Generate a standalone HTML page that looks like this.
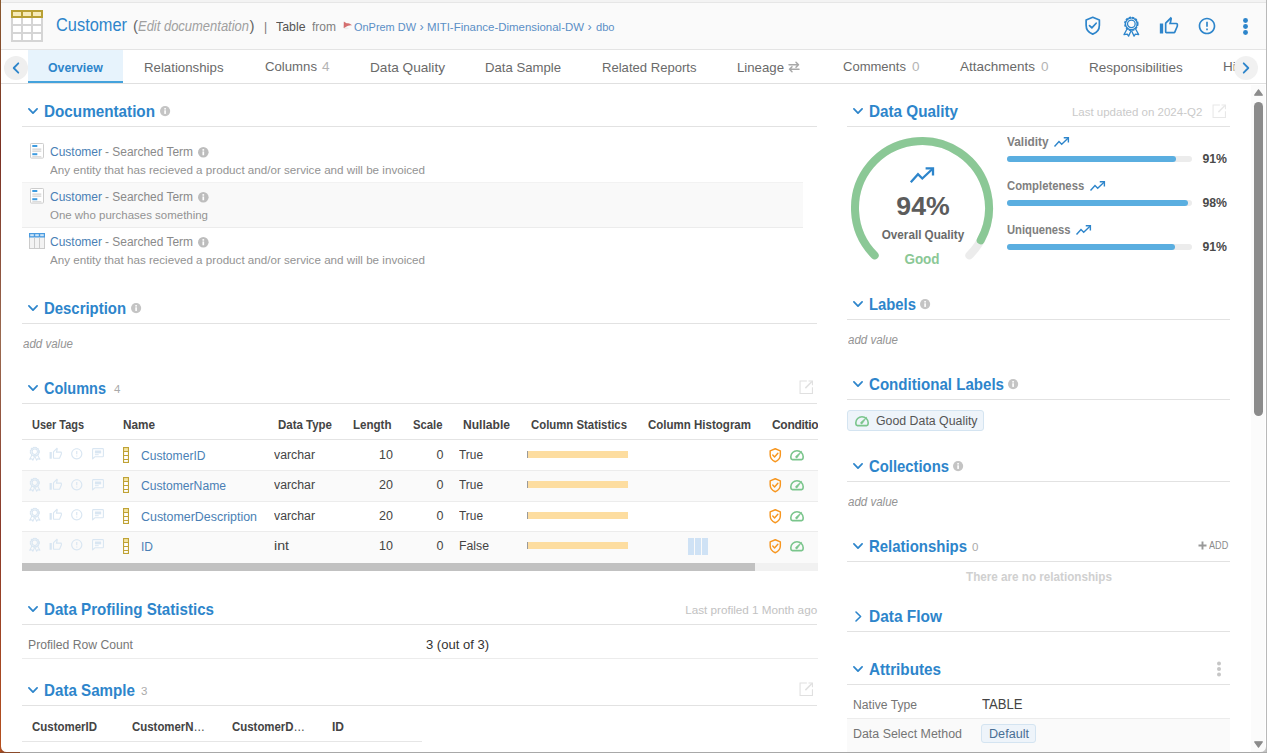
<!DOCTYPE html>
<html lang="en"><head><meta charset="utf-8"><title>Customer - Table</title>
<style>
html,body{margin:0;padding:0;}
body{width:1267px;height:753px;overflow:hidden;position:relative;background:#fff;font-family:"Liberation Sans", Arial, sans-serif;}
.t{position:absolute;white-space:nowrap;line-height:20px;height:20px;}
svg{display:block;overflow:visible;}
</style></head>
<body>
<div style="position:absolute;left:0px;top:0px;width:1267px;height:3px;background:#f3f3f3;"></div>
<div style="position:absolute;left:0px;top:2px;width:1267px;height:1px;background:#e6e6e6;"></div>
<div style="position:absolute;left:0px;top:3px;width:1267px;height:46px;background:#fafafa;"></div>
<div style="position:absolute;left:0px;top:49px;width:1267px;height:1px;background:#e4e4e4;"></div>
<div style="position:absolute;left:0px;top:83px;width:1267px;height:1px;background:#e0e0e0;"></div>
<svg style="position:absolute;left:11px;top:10px;" width="32" height="32" viewBox="0 0 32 32"><rect x="0" y="0" width="32" height="32" fill="#fff"/>
<g fill="#d5d5d5"><rect x="0" y="8" width="2" height="24"/><rect x="10" y="8" width="2" height="24"/><rect x="20" y="8" width="2" height="24"/><rect x="30" y="8" width="2" height="24"/>
<rect x="0" y="14" width="32" height="2"/><rect x="0" y="22" width="32" height="2"/><rect x="0" y="30" width="32" height="2"/></g>
<rect x="0" y="0" width="32" height="8" fill="#b8a034"/>
<g fill="#f6ebb8"><rect x="2" y="2" width="8" height="4"/><rect x="12" y="2" width="8" height="4"/><rect x="22" y="2" width="8" height="4"/></g></svg>
<svg style="position:absolute;left:342.5px;top:21px;" width="10" height="8" viewBox="0 0 10 8"><ellipse cx="3.2" cy="7.3" rx="2.6" ry="0.9" fill="#ececec"/><path d="M0.7 0.8 L1.3 0.6 L1.2 7 L0.6 7 Z" fill="#d9a0a0"/><path d="M1 0.9 C2.6 1.2 3 2.4 5 2.3 C6.6 2.4 8 3.6 9.3 4.3 C7.2 4.5 5.6 4.4 4 5.2 C2.8 5.8 1.8 6.4 0.9 7 Z" fill="#cf5f5f" fill-opacity="0.9"/></svg>
<svg style="position:absolute;left:1082.25px;top:15.25px;" width="21.5" height="21.5" viewBox="0 0 24 24"><path d="M12 2.6 L4.6 5.6 V11.4 C4.6 16 7.6 19.8 12 21.4 C16.4 19.8 19.4 16 19.4 11.4 V5.6 Z" fill="none" stroke="#2d85cb" stroke-width="1.9" stroke-linejoin="round"/><path d="M8.4 11.8 L11 14.4 L15.8 9.2" fill="none" stroke="#2d85cb" stroke-width="1.9" stroke-linecap="round" stroke-linejoin="round"/></svg>
<svg style="position:absolute;left:1122.8700000000001px;top:17.0px;" width="16.660000000000004" height="19.6" viewBox="0 0 17 20"><g fill="none" stroke="#2d85cb" stroke-width="1.3" stroke-linejoin="round"><circle cx="8.5" cy="7" r="6.5" stroke-dasharray="2.3 1.1" stroke-width="1.8"/><circle cx="8.5" cy="7" r="6"/><circle cx="8.5" cy="7" r="3.9"/><path d="M4.4 11.8 L1 18 L4.4 17.4 L5.7 19.5 L8.4 13.8"/><path d="M12.6 11.8 L16 18 L12.6 17.4 L11.3 19.5 L8.6 13.8"/></g></svg>
<svg style="position:absolute;left:1159.0px;top:15.5px;" width="20" height="20" viewBox="0 0 24 24"><path fill="#2d85cb" d="M9 21h9c.83 0 1.54-.5 1.84-1.22l3.02-7.05c.09-.23.14-.47.14-.73v-2c0-1.1-.9-2-2-2h-6.31l.95-4.57.03-.32c0-.41-.17-.79-.44-1.06L14.17 1 7.58 7.59C7.22 7.95 7 8.45 7 9v10c0 1.1.9 2 2 2zM9 9l4.34-4.34L12 10h9v2l-3 7H9V9zM1 9h4v12H1z"/></svg>
<svg style="position:absolute;left:1197.0px;top:16.0px;" width="20" height="20" viewBox="0 0 24 24"><path fill="#2d85cb" d="M11 15h2v2h-2zm0-8h2v6h-2zm.99-5C6.47 2 2 6.48 2 12s4.47 10 9.99 10C17.52 22 22 17.52 22 12S17.52 2 11.99 2zM12 20c-4.42 0-8-3.58-8-8s3.58-8 8-8 8 3.58 8 8-3.58 8-8 8z"/></svg>
<svg style="position:absolute;left:1234.5px;top:15.5px;" width="21" height="21" viewBox="0 0 24 24"><g fill="#2d85cb"><circle cx="12" cy="5.1" r="2.8"/><circle cx="12" cy="12" r="2.8"/><circle cx="12" cy="18.9" r="2.8"/></g></svg>
<div style="position:absolute;left:28px;top:50px;width:95px;height:31px;background:#e7f3fc;"></div>
<div style="position:absolute;left:28px;top:81px;width:95px;height:2px;background:#44a2dc;"></div>
<div style="position:absolute;left:4px;top:56px;width:24px;height:24px;border-radius:12px;background:#efefef"></div>
<svg style="position:absolute;left:10px;top:60px;z-index:3;" width="12" height="16" viewBox="0 0 12 16"><path d="M8.3 3.3 L3.7 8 L8.3 12.7" fill="none" stroke="#2d85cb" stroke-width="1.8" stroke-linecap="round" stroke-linejoin="round"/></svg>
<svg style="position:absolute;left:788px;top:61px;" width="12" height="12" viewBox="0 0 12 12"><g fill="none" stroke="#a8a8a8" stroke-width="1.5" stroke-linecap="round" stroke-linejoin="round"><path d="M1 3.7 H10.5 M8 1.2 L10.5 3.7 L8 6.2"/><path d="M11 8.3 H1.5 M4 5.8 L1.5 8.3 L4 10.8"/></g></svg>
<div style="position:absolute;left:1234.2px;top:56px;width:24px;height:24px;border-radius:12px;background:rgba(240,240,240,0.93);z-index:2"></div>
<svg style="position:absolute;left:1240.2px;top:60px;z-index:3;" width="12" height="16" viewBox="0 0 12 16"><path d="M3.7 3.3 L8.3 8 L3.7 12.7" fill="none" stroke="#2d85cb" stroke-width="1.8" stroke-linecap="round" stroke-linejoin="round"/></svg>
<svg style="position:absolute;left:27.5px;top:107.7px;" width="10" height="6.4" viewBox="0 0 11 7"><path d="M1 1 L5.5 5.6 L10 1" fill="none" stroke="#2d85cb" stroke-width="1.9" stroke-linecap="round" stroke-linejoin="round"/></svg>
<div style="position:absolute;left:22px;top:126px;width:795px;height:1px;background:#e2e2e2;"></div>
<svg style="position:absolute;left:159.9px;top:105.9px;" width="10.2" height="10.2" viewBox="0 0 10 10"><circle cx="5" cy="5" r="5" fill="#c4c4c4"/><rect x="4.2" y="4.2" width="1.6" height="3.6" fill="#fff"/><rect x="4.2" y="2" width="1.6" height="1.5" fill="#fff"/></svg>
<div style="position:absolute;left:22px;top:182px;width:781px;height:45px;background:#f9f9f9;"></div>
<div style="position:absolute;left:22px;top:227px;width:781px;height:1px;background:#ececec;"></div>
<div style="position:absolute;left:22px;top:182px;width:781px;height:1px;background:#f2f2f2;"></div>
<svg style="position:absolute;left:30px;top:143px;" width="14" height="16" viewBox="0 0 14 16"><rect x="0.5" y="0.5" width="13" height="14.6" rx="0.8" fill="#fff" stroke="#cdcdcd"/><g fill="#3d9be0"><rect x="2.3" y="2" width="5" height="2"/><rect x="2.3" y="10.2" width="5" height="2"/></g><g fill="#c6c6c6"><rect x="2.3" y="5.6" width="9" height="1"/><rect x="2.3" y="7.6" width="9" height="1"/><rect x="2.3" y="13.4" width="9" height="0.8"/></g></svg>
<svg style="position:absolute;left:197.89999999999998px;top:147.29999999999998px;" width="10.6" height="10.6" viewBox="0 0 10 10"><circle cx="5" cy="5" r="5" fill="#bdbdbd"/><rect x="4.2" y="4.2" width="1.6" height="3.6" fill="#fff"/><rect x="4.2" y="2" width="1.6" height="1.5" fill="#fff"/></svg>
<svg style="position:absolute;left:30px;top:188px;" width="14" height="16" viewBox="0 0 14 16"><rect x="0.5" y="0.5" width="13" height="14.6" rx="0.8" fill="#fff" stroke="#cdcdcd"/><g fill="#3d9be0"><rect x="2.3" y="2" width="5" height="2"/><rect x="2.3" y="10.2" width="5" height="2"/></g><g fill="#c6c6c6"><rect x="2.3" y="5.6" width="9" height="1"/><rect x="2.3" y="7.6" width="9" height="1"/><rect x="2.3" y="13.4" width="9" height="0.8"/></g></svg>
<svg style="position:absolute;left:197.89999999999998px;top:192.29999999999998px;" width="10.6" height="10.6" viewBox="0 0 10 10"><circle cx="5" cy="5" r="5" fill="#bdbdbd"/><rect x="4.2" y="4.2" width="1.6" height="3.6" fill="#fff"/><rect x="4.2" y="2" width="1.6" height="1.5" fill="#fff"/></svg>
<svg style="position:absolute;left:29px;top:233px;" width="16" height="16" viewBox="0 0 16 16"><rect x="0.5" y="0.5" width="15" height="15" fill="#f3f3f3" stroke="#cbcbcb"/><rect x="0" y="0" width="16" height="4.5" fill="#4a9be0"/><g fill="#cfe6f8"><rect x="1.2" y="1.2" width="3.6" height="2"/><rect x="6.2" y="1.2" width="3.6" height="2"/><rect x="11.2" y="1.2" width="3.6" height="2"/></g><g fill="#cbcbcb"><rect x="5" y="4.5" width="1" height="11"/><rect x="10" y="4.5" width="1" height="11"/></g></svg>
<svg style="position:absolute;left:197.89999999999998px;top:237.29999999999998px;" width="10.6" height="10.6" viewBox="0 0 10 10"><circle cx="5" cy="5" r="5" fill="#bdbdbd"/><rect x="4.2" y="4.2" width="1.6" height="3.6" fill="#fff"/><rect x="4.2" y="2" width="1.6" height="1.5" fill="#fff"/></svg>
<svg style="position:absolute;left:27.5px;top:304.7px;" width="10" height="6.4" viewBox="0 0 11 7"><path d="M1 1 L5.5 5.6 L10 1" fill="none" stroke="#2d85cb" stroke-width="1.9" stroke-linecap="round" stroke-linejoin="round"/></svg>
<div style="position:absolute;left:22px;top:323px;width:795px;height:1px;background:#e2e2e2;"></div>
<svg style="position:absolute;left:130.9px;top:302.9px;" width="10.2" height="10.2" viewBox="0 0 10 10"><circle cx="5" cy="5" r="5" fill="#c4c4c4"/><rect x="4.2" y="4.2" width="1.6" height="3.6" fill="#fff"/><rect x="4.2" y="2" width="1.6" height="1.5" fill="#fff"/></svg>
<svg style="position:absolute;left:27.5px;top:384.7px;" width="10" height="6.4" viewBox="0 0 11 7"><path d="M1 1 L5.5 5.6 L10 1" fill="none" stroke="#2d85cb" stroke-width="1.9" stroke-linecap="round" stroke-linejoin="round"/></svg>
<div style="position:absolute;left:22px;top:403px;width:795px;height:1px;background:#e2e2e2;"></div>
<svg style="position:absolute;left:798.55px;top:380.45px;" width="14.5" height="14.5" viewBox="0 0 15 15"><g fill="none" stroke="#e0e0e0" stroke-width="1.15"><path d="M8.2 1.1 H1.1 V13.9 H13.9 V7.6"/><path d="M6.6 8.4 L13.4 1.6" stroke-width="1.5"/><path d="M9.8 1.1 H13.9 V5.4"/></g></svg>
<div style="position:absolute;left:22px;top:439px;width:796px;height:1px;background:#e4e4e4;"></div>
<div style="position:absolute;left:22px;top:471px;width:796px;height:30px;background:#fafafa;"></div>
<div style="position:absolute;left:22px;top:532px;width:796px;height:31px;background:#fafafa;"></div>
<div style="position:absolute;left:22px;top:470px;width:796px;height:1px;background:#ececec;"></div>
<div style="position:absolute;left:22px;top:501px;width:796px;height:1px;background:#ececec;"></div>
<div style="position:absolute;left:22px;top:531px;width:796px;height:1px;background:#ececec;"></div>
<svg style="position:absolute;left:29.019999999999996px;top:447.0px;" width="11.559999999999999" height="13.6" viewBox="0 0 17 20"><g fill="none" stroke="#d9e6f2" stroke-width="1.5" stroke-linejoin="round"><circle cx="8.5" cy="7" r="6.5" stroke-dasharray="2.3 1.1" stroke-width="2.0"/><circle cx="8.5" cy="7" r="6"/><circle cx="8.5" cy="7" r="3.9"/><path d="M4.4 11.8 L1 18 L4.4 17.4 L5.7 19.5 L8.4 13.8"/><path d="M12.6 11.8 L16 18 L12.6 17.4 L11.3 19.5 L8.6 13.8"/></g></svg>
<svg style="position:absolute;left:49.05px;top:447.25px;" width="13.5" height="13.5" viewBox="0 0 24 24"><path fill="#d9e6f2" d="M9 21h9c.83 0 1.54-.5 1.84-1.22l3.02-7.05c.09-.23.14-.47.14-.73v-2c0-1.1-.9-2-2-2h-6.31l.95-4.57.03-.32c0-.41-.17-.79-.44-1.06L14.17 1 7.58 7.59C7.22 7.95 7 8.45 7 9v10c0 1.1.9 2 2 2zM9 9l4.34-4.34L12 10h9v2l-3 7H9V9zM1 9h4v12H1z"/></svg>
<svg style="position:absolute;left:70.05px;top:447.45px;" width="13.5" height="13.5" viewBox="0 0 24 24"><path fill="#d9e6f2" d="M11 15h2v2h-2zm0-8h2v6h-2zm.99-5C6.47 2 2 6.48 2 12s4.47 10 9.99 10C17.52 22 22 17.52 22 12S17.52 2 11.99 2zM12 20c-4.42 0-8-3.58-8-8s3.58-8 8-8 8 3.58 8 8-3.58 8-8 8z"/></svg>
<svg style="position:absolute;left:92.0px;top:447.95px;" width="12" height="11.5" viewBox="0 0 12 11.5"><path d="M0.6 10.9 V1.4 C0.6 0.9 0.9 0.6 1.4 0.6 H10.6 C11.1 0.6 11.4 0.9 11.4 1.4 V8 C11.4 8.5 11.1 8.8 10.6 8.8 H2.8 Z" fill="#fff" fill-opacity="0.6" stroke="#d9e6f2" stroke-width="1.1" stroke-linejoin="round"/><rect x="2.9" y="2.5" width="6.3" height="2.9" fill="#d9e6f2"/><rect x="2.9" y="6.2" width="3.8" height="1" fill="#d9e6f2"/></svg>
<svg style="position:absolute;left:123px;top:447px;" width="6" height="16" viewBox="0 0 6 16"><rect x="0" y="0" width="6" height="16" fill="#bfa235"/><rect x="1.1" y="1.1" width="3.8" height="2.9" fill="#f6e7a6"/><g fill="#fff"><rect x="1.1" y="5" width="3.8" height="3"/><rect x="1.1" y="9" width="3.8" height="3"/><rect x="1.1" y="13" width="3.8" height="1.9"/></g></svg>
<div style="position:absolute;left:527px;top:451px;width:101px;height:7px;background:#fddda0;"></div>
<div style="position:absolute;left:527px;top:451px;width:1px;height:7px;background:#9a9a9a;"></div>
<svg style="position:absolute;left:767.25px;top:446.75px;" width="16.5" height="16.5" viewBox="0 0 24 24"><path d="M12 2.6 L4.6 5.6 V11.4 C4.6 16 7.6 19.8 12 21.4 C16.4 19.8 19.4 16 19.4 11.4 V5.6 Z" fill="none" stroke="#f7961f" stroke-width="2.1" stroke-linejoin="round"/><path d="M8.4 11.8 L11 14.4 L15.8 9.2" fill="none" stroke="#f7961f" stroke-width="2.1" stroke-linecap="round" stroke-linejoin="round"/></svg>
<svg style="position:absolute;left:790.1px;top:449.8px;" width="14" height="10.4" viewBox="0 0 14 10.4"><path d="M2.4 9.6 C1.2 9.6 0.8 8.2 0.8 6.8 C0.8 3.4 3.6 0.8 7 0.8 C10.4 0.8 13.2 3.4 13.2 6.8 C13.2 8.2 12.8 9.6 11.6 9.6 Z" fill="none" stroke="#7ac58c" stroke-width="1.6" stroke-linejoin="round"/><path d="M11.9 1.0 L7.42 7.63 A1.1 1.1 0 0 1 5.78 6.17 Z" fill="#7ac58c" stroke="#7ac58c" stroke-width="0.5" stroke-linejoin="round"/></svg>
<svg style="position:absolute;left:29.019999999999996px;top:478.0px;" width="11.559999999999999" height="13.6" viewBox="0 0 17 20"><g fill="none" stroke="#d9e6f2" stroke-width="1.5" stroke-linejoin="round"><circle cx="8.5" cy="7" r="6.5" stroke-dasharray="2.3 1.1" stroke-width="2.0"/><circle cx="8.5" cy="7" r="6"/><circle cx="8.5" cy="7" r="3.9"/><path d="M4.4 11.8 L1 18 L4.4 17.4 L5.7 19.5 L8.4 13.8"/><path d="M12.6 11.8 L16 18 L12.6 17.4 L11.3 19.5 L8.6 13.8"/></g></svg>
<svg style="position:absolute;left:49.05px;top:478.25px;" width="13.5" height="13.5" viewBox="0 0 24 24"><path fill="#d9e6f2" d="M9 21h9c.83 0 1.54-.5 1.84-1.22l3.02-7.05c.09-.23.14-.47.14-.73v-2c0-1.1-.9-2-2-2h-6.31l.95-4.57.03-.32c0-.41-.17-.79-.44-1.06L14.17 1 7.58 7.59C7.22 7.95 7 8.45 7 9v10c0 1.1.9 2 2 2zM9 9l4.34-4.34L12 10h9v2l-3 7H9V9zM1 9h4v12H1z"/></svg>
<svg style="position:absolute;left:70.05px;top:478.45px;" width="13.5" height="13.5" viewBox="0 0 24 24"><path fill="#d9e6f2" d="M11 15h2v2h-2zm0-8h2v6h-2zm.99-5C6.47 2 2 6.48 2 12s4.47 10 9.99 10C17.52 22 22 17.52 22 12S17.52 2 11.99 2zM12 20c-4.42 0-8-3.58-8-8s3.58-8 8-8 8 3.58 8 8-3.58 8-8 8z"/></svg>
<svg style="position:absolute;left:92.0px;top:478.95px;" width="12" height="11.5" viewBox="0 0 12 11.5"><path d="M0.6 10.9 V1.4 C0.6 0.9 0.9 0.6 1.4 0.6 H10.6 C11.1 0.6 11.4 0.9 11.4 1.4 V8 C11.4 8.5 11.1 8.8 10.6 8.8 H2.8 Z" fill="#fff" fill-opacity="0.6" stroke="#d9e6f2" stroke-width="1.1" stroke-linejoin="round"/><rect x="2.9" y="2.5" width="6.3" height="2.9" fill="#d9e6f2"/><rect x="2.9" y="6.2" width="3.8" height="1" fill="#d9e6f2"/></svg>
<svg style="position:absolute;left:123px;top:477px;" width="6" height="16" viewBox="0 0 6 16"><rect x="0" y="0" width="6" height="16" fill="#bfa235"/><rect x="1.1" y="1.1" width="3.8" height="2.9" fill="#f6e7a6"/><g fill="#fff"><rect x="1.1" y="5" width="3.8" height="3"/><rect x="1.1" y="9" width="3.8" height="3"/><rect x="1.1" y="13" width="3.8" height="1.9"/></g></svg>
<div style="position:absolute;left:527px;top:481px;width:101px;height:7px;background:#fddda0;"></div>
<div style="position:absolute;left:527px;top:481px;width:1px;height:7px;background:#9a9a9a;"></div>
<svg style="position:absolute;left:767.25px;top:476.75px;" width="16.5" height="16.5" viewBox="0 0 24 24"><path d="M12 2.6 L4.6 5.6 V11.4 C4.6 16 7.6 19.8 12 21.4 C16.4 19.8 19.4 16 19.4 11.4 V5.6 Z" fill="none" stroke="#f7961f" stroke-width="2.1" stroke-linejoin="round"/><path d="M8.4 11.8 L11 14.4 L15.8 9.2" fill="none" stroke="#f7961f" stroke-width="2.1" stroke-linecap="round" stroke-linejoin="round"/></svg>
<svg style="position:absolute;left:790.1px;top:479.8px;" width="14" height="10.4" viewBox="0 0 14 10.4"><path d="M2.4 9.6 C1.2 9.6 0.8 8.2 0.8 6.8 C0.8 3.4 3.6 0.8 7 0.8 C10.4 0.8 13.2 3.4 13.2 6.8 C13.2 8.2 12.8 9.6 11.6 9.6 Z" fill="none" stroke="#7ac58c" stroke-width="1.6" stroke-linejoin="round"/><path d="M11.9 1.0 L7.42 7.63 A1.1 1.1 0 0 1 5.78 6.17 Z" fill="#7ac58c" stroke="#7ac58c" stroke-width="0.5" stroke-linejoin="round"/></svg>
<svg style="position:absolute;left:29.019999999999996px;top:507.99999999999994px;" width="11.559999999999999" height="13.6" viewBox="0 0 17 20"><g fill="none" stroke="#d9e6f2" stroke-width="1.5" stroke-linejoin="round"><circle cx="8.5" cy="7" r="6.5" stroke-dasharray="2.3 1.1" stroke-width="2.0"/><circle cx="8.5" cy="7" r="6"/><circle cx="8.5" cy="7" r="3.9"/><path d="M4.4 11.8 L1 18 L4.4 17.4 L5.7 19.5 L8.4 13.8"/><path d="M12.6 11.8 L16 18 L12.6 17.4 L11.3 19.5 L8.6 13.8"/></g></svg>
<svg style="position:absolute;left:49.05px;top:508.25px;" width="13.5" height="13.5" viewBox="0 0 24 24"><path fill="#d9e6f2" d="M9 21h9c.83 0 1.54-.5 1.84-1.22l3.02-7.05c.09-.23.14-.47.14-.73v-2c0-1.1-.9-2-2-2h-6.31l.95-4.57.03-.32c0-.41-.17-.79-.44-1.06L14.17 1 7.58 7.59C7.22 7.95 7 8.45 7 9v10c0 1.1.9 2 2 2zM9 9l4.34-4.34L12 10h9v2l-3 7H9V9zM1 9h4v12H1z"/></svg>
<svg style="position:absolute;left:70.05px;top:508.45000000000005px;" width="13.5" height="13.5" viewBox="0 0 24 24"><path fill="#d9e6f2" d="M11 15h2v2h-2zm0-8h2v6h-2zm.99-5C6.47 2 2 6.48 2 12s4.47 10 9.99 10C17.52 22 22 17.52 22 12S17.52 2 11.99 2zM12 20c-4.42 0-8-3.58-8-8s3.58-8 8-8 8 3.58 8 8-3.58 8-8 8z"/></svg>
<svg style="position:absolute;left:92.0px;top:508.95000000000005px;" width="12" height="11.5" viewBox="0 0 12 11.5"><path d="M0.6 10.9 V1.4 C0.6 0.9 0.9 0.6 1.4 0.6 H10.6 C11.1 0.6 11.4 0.9 11.4 1.4 V8 C11.4 8.5 11.1 8.8 10.6 8.8 H2.8 Z" fill="#fff" fill-opacity="0.6" stroke="#d9e6f2" stroke-width="1.1" stroke-linejoin="round"/><rect x="2.9" y="2.5" width="6.3" height="2.9" fill="#d9e6f2"/><rect x="2.9" y="6.2" width="3.8" height="1" fill="#d9e6f2"/></svg>
<svg style="position:absolute;left:123px;top:508px;" width="6" height="16" viewBox="0 0 6 16"><rect x="0" y="0" width="6" height="16" fill="#bfa235"/><rect x="1.1" y="1.1" width="3.8" height="2.9" fill="#f6e7a6"/><g fill="#fff"><rect x="1.1" y="5" width="3.8" height="3"/><rect x="1.1" y="9" width="3.8" height="3"/><rect x="1.1" y="13" width="3.8" height="1.9"/></g></svg>
<div style="position:absolute;left:527px;top:512px;width:101px;height:7px;background:#fddda0;"></div>
<div style="position:absolute;left:527px;top:512px;width:1px;height:7px;background:#9a9a9a;"></div>
<svg style="position:absolute;left:767.25px;top:507.75px;" width="16.5" height="16.5" viewBox="0 0 24 24"><path d="M12 2.6 L4.6 5.6 V11.4 C4.6 16 7.6 19.8 12 21.4 C16.4 19.8 19.4 16 19.4 11.4 V5.6 Z" fill="none" stroke="#f7961f" stroke-width="2.1" stroke-linejoin="round"/><path d="M8.4 11.8 L11 14.4 L15.8 9.2" fill="none" stroke="#f7961f" stroke-width="2.1" stroke-linecap="round" stroke-linejoin="round"/></svg>
<svg style="position:absolute;left:790.1px;top:510.8px;" width="14" height="10.4" viewBox="0 0 14 10.4"><path d="M2.4 9.6 C1.2 9.6 0.8 8.2 0.8 6.8 C0.8 3.4 3.6 0.8 7 0.8 C10.4 0.8 13.2 3.4 13.2 6.8 C13.2 8.2 12.8 9.6 11.6 9.6 Z" fill="none" stroke="#7ac58c" stroke-width="1.6" stroke-linejoin="round"/><path d="M11.9 1.0 L7.42 7.63 A1.1 1.1 0 0 1 5.78 6.17 Z" fill="#7ac58c" stroke="#7ac58c" stroke-width="0.5" stroke-linejoin="round"/></svg>
<svg style="position:absolute;left:29.019999999999996px;top:538.0px;" width="11.559999999999999" height="13.6" viewBox="0 0 17 20"><g fill="none" stroke="#d9e6f2" stroke-width="1.5" stroke-linejoin="round"><circle cx="8.5" cy="7" r="6.5" stroke-dasharray="2.3 1.1" stroke-width="2.0"/><circle cx="8.5" cy="7" r="6"/><circle cx="8.5" cy="7" r="3.9"/><path d="M4.4 11.8 L1 18 L4.4 17.4 L5.7 19.5 L8.4 13.8"/><path d="M12.6 11.8 L16 18 L12.6 17.4 L11.3 19.5 L8.6 13.8"/></g></svg>
<svg style="position:absolute;left:49.05px;top:538.25px;" width="13.5" height="13.5" viewBox="0 0 24 24"><path fill="#d9e6f2" d="M9 21h9c.83 0 1.54-.5 1.84-1.22l3.02-7.05c.09-.23.14-.47.14-.73v-2c0-1.1-.9-2-2-2h-6.31l.95-4.57.03-.32c0-.41-.17-.79-.44-1.06L14.17 1 7.58 7.59C7.22 7.95 7 8.45 7 9v10c0 1.1.9 2 2 2zM9 9l4.34-4.34L12 10h9v2l-3 7H9V9zM1 9h4v12H1z"/></svg>
<svg style="position:absolute;left:70.05px;top:538.45px;" width="13.5" height="13.5" viewBox="0 0 24 24"><path fill="#d9e6f2" d="M11 15h2v2h-2zm0-8h2v6h-2zm.99-5C6.47 2 2 6.48 2 12s4.47 10 9.99 10C17.52 22 22 17.52 22 12S17.52 2 11.99 2zM12 20c-4.42 0-8-3.58-8-8s3.58-8 8-8 8 3.58 8 8-3.58 8-8 8z"/></svg>
<svg style="position:absolute;left:92.0px;top:538.95px;" width="12" height="11.5" viewBox="0 0 12 11.5"><path d="M0.6 10.9 V1.4 C0.6 0.9 0.9 0.6 1.4 0.6 H10.6 C11.1 0.6 11.4 0.9 11.4 1.4 V8 C11.4 8.5 11.1 8.8 10.6 8.8 H2.8 Z" fill="#fff" fill-opacity="0.6" stroke="#d9e6f2" stroke-width="1.1" stroke-linejoin="round"/><rect x="2.9" y="2.5" width="6.3" height="2.9" fill="#d9e6f2"/><rect x="2.9" y="6.2" width="3.8" height="1" fill="#d9e6f2"/></svg>
<svg style="position:absolute;left:123px;top:538px;" width="6" height="16" viewBox="0 0 6 16"><rect x="0" y="0" width="6" height="16" fill="#bfa235"/><rect x="1.1" y="1.1" width="3.8" height="2.9" fill="#f6e7a6"/><g fill="#fff"><rect x="1.1" y="5" width="3.8" height="3"/><rect x="1.1" y="9" width="3.8" height="3"/><rect x="1.1" y="13" width="3.8" height="1.9"/></g></svg>
<div style="position:absolute;left:527px;top:542px;width:101px;height:7px;background:#fddda0;"></div>
<div style="position:absolute;left:527px;top:542px;width:1px;height:7px;background:#9a9a9a;"></div>
<svg style="position:absolute;left:767.25px;top:537.75px;" width="16.5" height="16.5" viewBox="0 0 24 24"><path d="M12 2.6 L4.6 5.6 V11.4 C4.6 16 7.6 19.8 12 21.4 C16.4 19.8 19.4 16 19.4 11.4 V5.6 Z" fill="none" stroke="#f7961f" stroke-width="2.1" stroke-linejoin="round"/><path d="M8.4 11.8 L11 14.4 L15.8 9.2" fill="none" stroke="#f7961f" stroke-width="2.1" stroke-linecap="round" stroke-linejoin="round"/></svg>
<svg style="position:absolute;left:790.1px;top:540.8px;" width="14" height="10.4" viewBox="0 0 14 10.4"><path d="M2.4 9.6 C1.2 9.6 0.8 8.2 0.8 6.8 C0.8 3.4 3.6 0.8 7 0.8 C10.4 0.8 13.2 3.4 13.2 6.8 C13.2 8.2 12.8 9.6 11.6 9.6 Z" fill="none" stroke="#7ac58c" stroke-width="1.6" stroke-linejoin="round"/><path d="M11.9 1.0 L7.42 7.63 A1.1 1.1 0 0 1 5.78 6.17 Z" fill="#7ac58c" stroke="#7ac58c" stroke-width="0.5" stroke-linejoin="round"/></svg>
<div style="position:absolute;left:688px;top:538px;width:6px;height:17px;background:#cfe2f5;"></div>
<div style="position:absolute;left:695px;top:538px;width:6px;height:17px;background:#cfe2f5;"></div>
<div style="position:absolute;left:702px;top:538px;width:6px;height:17px;background:#cfe2f5;"></div>
<div style="position:absolute;left:22px;top:563px;width:796px;height:8px;background:#f1f1f1;"></div>
<div style="position:absolute;left:22px;top:563px;width:733px;height:8px;background:#c1c1c1;"></div>
<svg style="position:absolute;left:27.5px;top:605.7px;" width="10" height="6.4" viewBox="0 0 11 7"><path d="M1 1 L5.5 5.6 L10 1" fill="none" stroke="#2d85cb" stroke-width="1.9" stroke-linecap="round" stroke-linejoin="round"/></svg>
<div style="position:absolute;left:22px;top:624px;width:795px;height:1px;background:#e2e2e2;"></div>
<div style="position:absolute;left:22px;top:658px;width:796px;height:1px;background:#ececec;"></div>
<svg style="position:absolute;left:27.5px;top:686.7px;" width="10" height="6.4" viewBox="0 0 11 7"><path d="M1 1 L5.5 5.6 L10 1" fill="none" stroke="#2d85cb" stroke-width="1.9" stroke-linecap="round" stroke-linejoin="round"/></svg>
<div style="position:absolute;left:22px;top:705px;width:795px;height:1px;background:#e2e2e2;"></div>
<svg style="position:absolute;left:798.55px;top:682.45px;" width="14.5" height="14.5" viewBox="0 0 15 15"><g fill="none" stroke="#e0e0e0" stroke-width="1.15"><path d="M8.2 1.1 H1.1 V13.9 H13.9 V7.6"/><path d="M6.6 8.4 L13.4 1.6" stroke-width="1.5"/><path d="M9.8 1.1 H13.9 V5.4"/></g></svg>
<div style="position:absolute;left:22px;top:741px;width:400px;height:1px;background:#e6e6e6;"></div>
<svg style="position:absolute;left:852.5px;top:107.7px;" width="10" height="6.4" viewBox="0 0 11 7"><path d="M1 1 L5.5 5.6 L10 1" fill="none" stroke="#2d85cb" stroke-width="1.9" stroke-linecap="round" stroke-linejoin="round"/></svg>
<div style="position:absolute;left:847px;top:126px;width:383px;height:1px;background:#e2e2e2;"></div>
<svg style="position:absolute;left:1211.65px;top:103.55px;" width="14.5" height="14.5" viewBox="0 0 15 15"><g fill="none" stroke="#e8e8e8" stroke-width="1.15"><path d="M8.2 1.1 H1.1 V13.9 H13.9 V7.6"/><path d="M6.6 8.4 L13.4 1.6" stroke-width="1.5"/><path d="M9.8 1.1 H13.9 V5.4"/></g></svg>
<svg style="position:absolute;left:0;top:0" width="1267" height="300" viewBox="0 0 1267 300"><path d="M874.62 255.38 A67 67 0 1 1 969.38 255.38" fill="none" stroke="#ececec" stroke-width="8" stroke-linecap="round"/><path d="M874.62 255.38 A67 67 0 1 1 980.71 240.28" fill="none" stroke="#8bc896" stroke-width="8" stroke-linecap="round"/></svg>
<svg style="position:absolute;left:910.2px;top:167.0px;" width="24" height="16.0" viewBox="0 0 24 16"><g fill="none" stroke="#2d85cb" stroke-width="2.3" stroke-linejoin="miter" stroke-linecap="butt"><path d="M0.8 15.2 L8 7.2 L12.3 11.5 L22.4 2"/><path d="M15.6 1.3 H23 V8.6"/></g></svg>
<svg style="position:absolute;left:1054.3px;top:136.5px;" width="15" height="10.0" viewBox="0 0 24 16"><g fill="none" stroke="#2d85cb" stroke-width="2.25" stroke-linejoin="miter" stroke-linecap="butt"><path d="M0.8 15.2 L8 7.2 L12.3 11.5 L22.4 2"/><path d="M15.6 1.3 H23 V8.6"/></g></svg>
<div style="position:absolute;left:1007px;top:156px;width:185px;height:6px;border-radius:3px;background:#ececec"></div>
<div style="position:absolute;left:1007px;top:156px;width:169.1px;height:6px;border-radius:3px;background:#5aaee0"></div>
<svg style="position:absolute;left:1090.0px;top:180.5px;" width="15" height="10.0" viewBox="0 0 24 16"><g fill="none" stroke="#2d85cb" stroke-width="2.25" stroke-linejoin="miter" stroke-linecap="butt"><path d="M0.8 15.2 L8 7.2 L12.3 11.5 L22.4 2"/><path d="M15.6 1.3 H23 V8.6"/></g></svg>
<div style="position:absolute;left:1007px;top:200px;width:185px;height:6px;border-radius:3px;background:#ececec"></div>
<div style="position:absolute;left:1007px;top:200px;width:181.3px;height:6px;border-radius:3px;background:#5aaee0"></div>
<svg style="position:absolute;left:1076.3px;top:224.5px;" width="15" height="10.0" viewBox="0 0 24 16"><g fill="none" stroke="#2d85cb" stroke-width="2.25" stroke-linejoin="miter" stroke-linecap="butt"><path d="M0.8 15.2 L8 7.2 L12.3 11.5 L22.4 2"/><path d="M15.6 1.3 H23 V8.6"/></g></svg>
<div style="position:absolute;left:1007px;top:244px;width:185px;height:6px;border-radius:3px;background:#ececec"></div>
<div style="position:absolute;left:1007px;top:244px;width:167.9px;height:6px;border-radius:3px;background:#5aaee0"></div>
<svg style="position:absolute;left:852.5px;top:300.7px;" width="10" height="6.4" viewBox="0 0 11 7"><path d="M1 1 L5.5 5.6 L10 1" fill="none" stroke="#2d85cb" stroke-width="1.9" stroke-linecap="round" stroke-linejoin="round"/></svg>
<div style="position:absolute;left:847px;top:319px;width:383px;height:1px;background:#e2e2e2;"></div>
<svg style="position:absolute;left:919.9px;top:298.9px;" width="10.2" height="10.2" viewBox="0 0 10 10"><circle cx="5" cy="5" r="5" fill="#c4c4c4"/><rect x="4.2" y="4.2" width="1.6" height="3.6" fill="#fff"/><rect x="4.2" y="2" width="1.6" height="1.5" fill="#fff"/></svg>
<svg style="position:absolute;left:852.5px;top:380.7px;" width="10" height="6.4" viewBox="0 0 11 7"><path d="M1 1 L5.5 5.6 L10 1" fill="none" stroke="#2d85cb" stroke-width="1.9" stroke-linecap="round" stroke-linejoin="round"/></svg>
<div style="position:absolute;left:847px;top:399px;width:383px;height:1px;background:#e2e2e2;"></div>
<svg style="position:absolute;left:1007.9px;top:378.9px;" width="10.2" height="10.2" viewBox="0 0 10 10"><circle cx="5" cy="5" r="5" fill="#c4c4c4"/><rect x="4.2" y="4.2" width="1.6" height="3.6" fill="#fff"/><rect x="4.2" y="2" width="1.6" height="1.5" fill="#fff"/></svg>
<div style="position:absolute;left:847px;top:410px;width:135px;height:19px;border:1px solid #d4e4f1;background:#eef4fa;border-radius:3px"></div>
<svg style="position:absolute;left:855.0px;top:415.8px;" width="14" height="10.4" viewBox="0 0 14 10.4"><path d="M2.4 9.6 C1.2 9.6 0.8 8.2 0.8 6.8 C0.8 3.4 3.6 0.8 7 0.8 C10.4 0.8 13.2 3.4 13.2 6.8 C13.2 8.2 12.8 9.6 11.6 9.6 Z" fill="none" stroke="#7ac58c" stroke-width="1.6" stroke-linejoin="round"/><path d="M11.9 1.0 L7.42 7.63 A1.1 1.1 0 0 1 5.78 6.17 Z" fill="#7ac58c" stroke="#7ac58c" stroke-width="0.5" stroke-linejoin="round"/></svg>
<svg style="position:absolute;left:852.5px;top:462.7px;" width="10" height="6.4" viewBox="0 0 11 7"><path d="M1 1 L5.5 5.6 L10 1" fill="none" stroke="#2d85cb" stroke-width="1.9" stroke-linecap="round" stroke-linejoin="round"/></svg>
<div style="position:absolute;left:847px;top:481px;width:383px;height:1px;background:#e2e2e2;"></div>
<svg style="position:absolute;left:952.9px;top:460.9px;" width="10.2" height="10.2" viewBox="0 0 10 10"><circle cx="5" cy="5" r="5" fill="#c4c4c4"/><rect x="4.2" y="4.2" width="1.6" height="3.6" fill="#fff"/><rect x="4.2" y="2" width="1.6" height="1.5" fill="#fff"/></svg>
<svg style="position:absolute;left:852.5px;top:542.7px;" width="10" height="6.4" viewBox="0 0 11 7"><path d="M1 1 L5.5 5.6 L10 1" fill="none" stroke="#2d85cb" stroke-width="1.9" stroke-linecap="round" stroke-linejoin="round"/></svg>
<div style="position:absolute;left:847px;top:561px;width:383px;height:1px;background:#e2e2e2;"></div>
<svg style="position:absolute;left:1197.5px;top:540.5px;" width="9" height="9" viewBox="0 0 9 9"><path d="M4.5 0.5 V8.5 M0.5 4.5 H8.5" stroke="#999" stroke-width="1.9" fill="none"/></svg>
<svg style="position:absolute;left:855px;top:610.5px;" width="7" height="11" viewBox="0 0 7 11"><path d="M1 1 L5.6 5.5 L1 10" fill="none" stroke="#2d85cb" stroke-width="1.6" stroke-linecap="round" stroke-linejoin="round"/></svg>
<div style="position:absolute;left:847px;top:631px;width:383px;height:1px;background:#e2e2e2;"></div>
<svg style="position:absolute;left:852.5px;top:665.7px;" width="10" height="6.4" viewBox="0 0 11 7"><path d="M1 1 L5.5 5.6 L10 1" fill="none" stroke="#2d85cb" stroke-width="1.9" stroke-linecap="round" stroke-linejoin="round"/></svg>
<div style="position:absolute;left:847px;top:684px;width:383px;height:1px;background:#e2e2e2;"></div>
<svg style="position:absolute;left:1214px;top:661px;" width="10" height="16" viewBox="0 0 10 16"><g fill="#c6c6c6"><circle cx="5" cy="2.4" r="2"/><circle cx="5" cy="8" r="2"/><circle cx="5" cy="13.6" r="2"/></g></svg>
<div style="position:absolute;left:847px;top:718px;width:383px;height:1px;background:#ececec;"></div>
<div style="position:absolute;left:847px;top:719px;width:383px;height:33px;background:#fafafa;"></div>
<div style="position:absolute;left:981px;top:724px;width:53px;height:17px;border:1px solid #d4e4f1;background:#eef4fa;border-radius:3px"></div>
<div style="position:absolute;left:1251px;top:85px;width:14px;height:667px;background:#fbfbfb;"></div>
<div style="position:absolute;left:1254px;top:101.5px;width:9px;height:314.5px;border-radius:4.5px;background:#8b8b8b"></div>
<svg style="position:absolute;left:1254px;top:89px;" width="9" height="7" viewBox="0 0 9 7"><path d="M4.5 0.8 L8.3 6.2 H0.7 Z" fill="#8b8b8b" stroke="#8b8b8b" stroke-width="1.2" stroke-linejoin="round"/></svg>
<svg style="position:absolute;left:1254px;top:741px;" width="9" height="7" viewBox="0 0 9 7"><path d="M4.5 6.2 L8.3 0.8 H0.7 Z" fill="#8b8b8b" stroke="#8b8b8b" stroke-width="1.2" stroke-linejoin="round"/></svg>
<svg style="position:absolute;left:0;top:0" width="1267" height="753" viewBox="0 0 1267 753"><defs><linearGradient id="dk" x1="0" y1="0" x2="0" y2="1"><stop offset="0" stop-color="#8a5a30"/><stop offset="0.2" stop-color="#7a2f22"/><stop offset="0.45" stop-color="#9a6a50"/><stop offset="0.7" stop-color="#8a3a2a"/><stop offset="1" stop-color="#b5501e"/></linearGradient></defs><rect x="0" y="0" width="1" height="753" fill="url(#dk)"/><rect x="1266" y="0" width="1" height="753" fill="#b9b9b9"/><rect x="0" y="752" width="20" height="1" fill="#8a4a2a"/><rect x="20" y="752" width="1247" height="1" fill="#a8a8a8"/><path d="M1 746.5 A5.5 5.5 0 0 0 6.5 752 L1 752 Z" fill="#a04a22"/><path d="M1266 746.5 A5.5 5.5 0 0 1 1260.500 752 L1266 752 Z" fill="#c4c4c4"/></svg>
<span class="t" style="top:14.75px;font-size:18.5px;color:#2d85cb;left:56px;transform:scaleX(0.8853);transform-origin:left center;">Customer</span>
<span class="t" style="top:15.75px;font-size:15px;color:#666;left:133px;">(</span>
<span class="t" style="top:15.75px;font-size:14.5px;color:#a0a0a0;left:138px;font-style:italic;transform:scaleX(0.8941);transform-origin:left center;">Edit documentation</span>
<span class="t" style="top:15.75px;font-size:15px;color:#666;left:249.5px;">)</span>
<span class="t" style="top:16.5px;font-size:12px;color:#777;left:264px;">|</span>
<span class="t" style="top:16.5px;font-size:13.5px;color:#555;left:276px;transform:scaleX(0.9138);transform-origin:left center;">Table</span>
<span class="t" style="top:16.5px;font-size:12.5px;color:#808080;left:312px;transform:scaleX(0.9600);transform-origin:left center;">from</span>
<span class="t" style="top:17.0px;font-size:11.5px;color:#5a8fc6;left:354px;transform:scaleX(0.9513);transform-origin:left center;">OnPrem DW</span>
<span class="t" style="top:16.5px;font-size:12.5px;color:#5a8fc6;left:419.5px;">&rsaquo;</span>
<span class="t" style="top:17.0px;font-size:11.5px;color:#5a8fc6;left:427px;transform:scaleX(0.9947);transform-origin:left center;">MITI-Finance-Dimensional-DW</span>
<span class="t" style="top:16.5px;font-size:12.5px;color:#5a8fc6;left:587.5px;">&rsaquo;</span>
<span class="t" style="top:17.0px;font-size:11.5px;color:#5a8fc6;left:596px;transform:scaleX(0.9642);transform-origin:left center;">dbo</span>
<span class="t" style="top:58.25px;font-size:13.5px;color:#2d85cb;left:48.3px;font-weight:bold;transform:scaleX(0.9110);transform-origin:left center;">Overview</span>
<span class="t" style="top:58.25px;font-size:13.5px;color:#6a6a6a;left:144.3px;transform:scaleX(0.9809);transform-origin:left center;">Relationships</span>
<span class="t" style="top:57.0px;font-size:13.5px;color:#6a6a6a;left:265px;transform:scaleX(0.9760);transform-origin:left center;">Columns</span>
<span class="t" style="top:57.0px;font-size:13.5px;color:#b4b4b4;left:322px;">4</span>
<span class="t" style="top:58.25px;font-size:13.5px;color:#6a6a6a;left:370px;transform:scaleX(1.0095);transform-origin:left center;">Data Quality</span>
<span class="t" style="top:58.25px;font-size:13.5px;color:#6a6a6a;left:485px;transform:scaleX(0.9738);transform-origin:left center;">Data Sample</span>
<span class="t" style="top:58.25px;font-size:13.5px;color:#6a6a6a;left:602px;transform:scaleX(0.9686);transform-origin:left center;">Related Reports</span>
<span class="t" style="top:58.25px;font-size:13.5px;color:#6a6a6a;left:737px;transform:scaleX(0.9779);transform-origin:left center;">Lineage</span>
<span class="t" style="top:57.0px;font-size:13.5px;color:#6a6a6a;left:843px;transform:scaleX(0.9653);transform-origin:left center;">Comments</span>
<span class="t" style="top:57.0px;font-size:13.5px;color:#b4b4b4;left:912px;">0</span>
<span class="t" style="top:57.0px;font-size:13.5px;color:#6a6a6a;left:960px;">Attachments</span>
<span class="t" style="top:57.0px;font-size:13.5px;color:#b4b4b4;left:1041px;">0</span>
<span class="t" style="top:58.25px;font-size:13.5px;color:#6a6a6a;left:1089px;">Responsibilities</span>
<span class="t" style="top:57.0px;font-size:13.5px;color:#6a6a6a;left:1223px;">Hi</span>
<span class="t" style="top:100.75px;font-size:16.25px;color:#2d85cb;left:44px;font-weight:bold;transform:scaleX(0.9386);transform-origin:left center;">Documentation</span>
<span class="t" style="top:142.0px;font-size:12.5px;color:#4a7fb5;left:50px;transform:scaleX(0.9596);transform-origin:left center;">Customer</span>
<span class="t" style="top:142.0px;font-size:12.5px;color:#8a8a8a;left:105px;transform:scaleX(0.9547);transform-origin:left center;">- Searched Term</span>
<span class="t" style="top:159.75px;font-size:11px;color:#939393;left:50px;transform:scaleX(1.0574);transform-origin:left center;">Any entity that has recieved a product and/or service and will be invoiced</span>
<span class="t" style="top:187.0px;font-size:12.5px;color:#4a7fb5;left:50px;transform:scaleX(0.9596);transform-origin:left center;">Customer</span>
<span class="t" style="top:187.0px;font-size:12.5px;color:#8a8a8a;left:105px;transform:scaleX(0.9547);transform-origin:left center;">- Searched Term</span>
<span class="t" style="top:204.75px;font-size:11px;color:#939393;left:50px;transform:scaleX(1.0418);transform-origin:left center;">One who purchases something</span>
<span class="t" style="top:232.0px;font-size:12.5px;color:#4a7fb5;left:50px;transform:scaleX(0.9596);transform-origin:left center;">Customer</span>
<span class="t" style="top:232.0px;font-size:12.5px;color:#8a8a8a;left:105px;transform:scaleX(0.9547);transform-origin:left center;">- Searched Term</span>
<span class="t" style="top:249.75px;font-size:11px;color:#939393;left:50px;transform:scaleX(1.0574);transform-origin:left center;">Any entity that has recieved a product and/or service and will be invoiced</span>
<span class="t" style="top:297.75px;font-size:16.25px;color:#2d85cb;left:44px;font-weight:bold;transform:scaleX(0.9172);transform-origin:left center;">Description</span>
<span class="t" style="top:334.25px;font-size:12.5px;color:#949494;left:23px;font-style:italic;transform:scaleX(0.9222);transform-origin:left center;">add value</span>
<span class="t" style="top:377.75px;font-size:16.25px;color:#2d85cb;left:44px;font-weight:bold;transform:scaleX(0.8919);transform-origin:left center;">Columns</span>
<span class="t" style="top:378.5px;font-size:11.5px;color:#aaa;left:114px;">4</span>
<span class="t" style="top:415.25px;font-size:12.5px;color:#444;left:32px;font-weight:bold;transform:scaleX(0.8737);transform-origin:left center;">User Tags</span>
<span class="t" style="top:415.25px;font-size:12.5px;color:#444;left:123px;font-weight:bold;transform:scaleX(0.9399);transform-origin:left center;">Name</span>
<span class="t" style="top:415.25px;font-size:12.5px;color:#444;left:278px;font-weight:bold;transform:scaleX(0.9179);transform-origin:left center;">Data Type</span>
<span class="t" style="top:415.25px;font-size:12.5px;color:#444;left:353px;font-weight:bold;transform:scaleX(0.9239);transform-origin:left center;">Length</span>
<span class="t" style="top:415.25px;font-size:12.5px;color:#444;left:413px;font-weight:bold;transform:scaleX(0.9029);transform-origin:left center;">Scale</span>
<span class="t" style="top:415.25px;font-size:12.5px;color:#444;left:463px;font-weight:bold;transform:scaleX(0.9666);transform-origin:left center;">Nullable</span>
<span class="t" style="top:415.25px;font-size:12.5px;color:#444;left:531px;font-weight:bold;transform:scaleX(0.9093);transform-origin:left center;">Column Statistics</span>
<span class="t" style="top:415.25px;font-size:12.5px;color:#444;left:648px;font-weight:bold;transform:scaleX(0.9212);transform-origin:left center;">Column Histogram</span>
<span class="t" style="top:415.25px;font-size:12px;color:#444;left:772px;font-weight:bold;width:45.5px;overflow:hidden;letter-spacing:-0.3px;">Conditional</span>
<span class="t" style="top:445.75px;font-size:12.5px;color:#4a7fb5;left:141px;transform:scaleX(0.9672);transform-origin:left center;">CustomerID</span>
<span class="t" style="top:444.75px;font-size:12.5px;color:#444;left:274px;transform:scaleX(0.9835);transform-origin:left center;">varchar</span>
<span class="t" style="top:444.75px;font-size:12.5px;color:#444;right:874px;">10</span>
<span class="t" style="top:444.75px;font-size:12.5px;color:#444;right:823.5px;">0</span>
<span class="t" style="top:444.75px;font-size:12.5px;color:#444;left:459px;transform:scaleX(0.9505);transform-origin:left center;">True</span>
<span class="t" style="top:475.75px;font-size:12.5px;color:#4a7fb5;left:141px;transform:scaleX(0.9711);transform-origin:left center;">CustomerName</span>
<span class="t" style="top:474.75px;font-size:12.5px;color:#444;left:274px;transform:scaleX(0.9835);transform-origin:left center;">varchar</span>
<span class="t" style="top:474.75px;font-size:12.5px;color:#444;right:874px;">20</span>
<span class="t" style="top:474.75px;font-size:12.5px;color:#444;right:823.5px;">0</span>
<span class="t" style="top:474.75px;font-size:12.5px;color:#444;left:459px;transform:scaleX(0.9505);transform-origin:left center;">True</span>
<span class="t" style="top:506.75px;font-size:12.5px;color:#4a7fb5;left:141px;transform:scaleX(0.9938);transform-origin:left center;">CustomerDescription</span>
<span class="t" style="top:505.75px;font-size:12.5px;color:#444;left:274px;transform:scaleX(0.9835);transform-origin:left center;">varchar</span>
<span class="t" style="top:505.75px;font-size:12.5px;color:#444;right:874px;">20</span>
<span class="t" style="top:505.75px;font-size:12.5px;color:#444;right:823.5px;">0</span>
<span class="t" style="top:505.75px;font-size:12.5px;color:#444;left:459px;transform:scaleX(0.9505);transform-origin:left center;">True</span>
<span class="t" style="top:536.75px;font-size:12.5px;color:#4a7fb5;left:141px;transform:scaleX(0.9600);transform-origin:left center;">ID</span>
<span class="t" style="top:535.75px;font-size:12.5px;color:#444;left:274px;transform:scaleX(1.1361);transform-origin:left center;">int</span>
<span class="t" style="top:535.75px;font-size:12.5px;color:#444;right:874px;">10</span>
<span class="t" style="top:535.75px;font-size:12.5px;color:#444;right:823.5px;">0</span>
<span class="t" style="top:535.75px;font-size:12.5px;color:#444;left:459px;transform:scaleX(0.9811);transform-origin:left center;">False</span>
<span class="t" style="top:598.75px;font-size:16.25px;color:#2d85cb;left:44px;font-weight:bold;transform:scaleX(0.9320);transform-origin:left center;">Data Profiling Statistics</span>
<span class="t" style="top:599.5px;font-size:11px;color:#c2c2c2;right:450px;transform:scaleX(1.0633);transform-origin:right center;">Last profiled 1 Month ago</span>
<span class="t" style="top:635.25px;font-size:12.5px;color:#777;left:28px;transform:scaleX(0.9749);transform-origin:left center;">Profiled Row Count</span>
<span class="t" style="top:635.25px;font-size:12px;color:#333;left:426px;transform:scaleX(1.0856);transform-origin:left center;">3 (out of 3)</span>
<span class="t" style="top:679.75px;font-size:16.25px;color:#2d85cb;left:44px;font-weight:bold;transform:scaleX(0.9329);transform-origin:left center;">Data Sample</span>
<span class="t" style="top:680.5px;font-size:11.5px;color:#aaa;left:141px;">3</span>
<span class="t" style="top:717.25px;font-size:12px;color:#444;left:32px;font-weight:bold;transform:scaleX(0.9557);transform-origin:left center;">CustomerID</span>
<span class="t" style="top:717.25px;font-size:12px;color:#444;left:132px;font-weight:bold;transform:scaleX(0.9519);transform-origin:left center;">CustomerN<span style="font-weight:normal">&hellip;</span></span>
<span class="t" style="top:717.25px;font-size:12px;color:#444;left:232px;font-weight:bold;transform:scaleX(0.9519);transform-origin:left center;">CustomerD<span style="font-weight:normal">&hellip;</span></span>
<span class="t" style="top:717.25px;font-size:12px;color:#444;left:332px;font-weight:bold;">ID</span>
<span class="t" style="top:100.75px;font-size:16.25px;color:#2d85cb;left:869px;font-weight:bold;transform:scaleX(0.9385);transform-origin:left center;">Data Quality</span>
<span class="t" style="top:102.0px;font-size:11.5px;color:#cacaca;right:64.70000000000005px;">Last updated on 2024-Q2</span>
<span class="t" style="top:195.75px;font-size:26.5px;color:#5c5c5c;left:723.4px;width:400px;text-align:center;font-weight:bold;transform:scaleX(1.0067);transform-origin:center center;">94%</span>
<span class="t" style="top:224.5px;font-size:12.5px;color:#6a6a6a;left:722.5px;width:400px;text-align:center;font-weight:bold;transform:scaleX(0.9350);transform-origin:center center;">Overall Quality</span>
<span class="t" style="top:249.0px;font-size:15.5px;color:#8bc896;left:721.8px;width:400px;text-align:center;font-weight:bold;transform:scaleX(0.8698);transform-origin:center center;">Good</span>
<span class="t" style="top:131.5px;font-size:12.5px;color:#808080;left:1007.4px;font-weight:bold;transform:scaleX(0.9479);transform-origin:left center;">Validity</span>
<span class="t" style="top:148.75px;font-size:12.5px;color:#4a4a4a;right:39.799999999999955px;font-weight:bold;transform:scaleX(0.9828);transform-origin:right center;">91%</span>
<span class="t" style="top:175.5px;font-size:12.5px;color:#808080;left:1007.4px;font-weight:bold;transform:scaleX(0.9034);transform-origin:left center;">Completeness</span>
<span class="t" style="top:192.75px;font-size:12.5px;color:#4a4a4a;right:39.799999999999955px;font-weight:bold;transform:scaleX(0.9828);transform-origin:right center;">98%</span>
<span class="t" style="top:219.5px;font-size:12.5px;color:#808080;left:1007.4px;font-weight:bold;transform:scaleX(0.8961);transform-origin:left center;">Uniqueness</span>
<span class="t" style="top:236.75px;font-size:12.5px;color:#4a4a4a;right:39.799999999999955px;font-weight:bold;transform:scaleX(0.9828);transform-origin:right center;">91%</span>
<span class="t" style="top:293.75px;font-size:16.25px;color:#2d85cb;left:869px;font-weight:bold;transform:scaleX(0.9129);transform-origin:left center;">Labels</span>
<span class="t" style="top:330.25px;font-size:12.5px;color:#949494;left:848px;font-style:italic;transform:scaleX(0.9222);transform-origin:left center;">add value</span>
<span class="t" style="top:373.75px;font-size:16.25px;color:#2d85cb;left:869px;font-weight:bold;transform:scaleX(0.9287);transform-origin:left center;">Conditional Labels</span>
<span class="t" style="top:410.5px;font-size:12.5px;color:#555;left:875.8px;transform:scaleX(0.9869);transform-origin:left center;">Good Data Quality</span>
<span class="t" style="top:455.75px;font-size:16.25px;color:#2d85cb;left:869px;font-weight:bold;transform:scaleX(0.9133);transform-origin:left center;">Collections</span>
<span class="t" style="top:492.25px;font-size:12.5px;color:#949494;left:848px;font-style:italic;transform:scaleX(0.9222);transform-origin:left center;">add value</span>
<span class="t" style="top:535.75px;font-size:16.25px;color:#2d85cb;left:869px;font-weight:bold;transform:scaleX(0.9198);transform-origin:left center;">Relationships</span>
<span class="t" style="top:536.5px;font-size:11.5px;color:#aaa;left:972px;">0</span>
<span class="t" style="top:535.25px;font-size:10.5px;color:#8c8c8c;left:1208.8px;transform:scaleX(0.8660);transform-origin:left center;">ADD</span>
<span class="t" style="top:567.0px;font-size:12.5px;color:#d0d0d0;left:838.5px;width:400px;text-align:center;font-weight:bold;transform:scaleX(0.9341);transform-origin:center center;">There are no relationships</span>
<span class="t" style="top:605.75px;font-size:16.25px;color:#2d85cb;left:869px;font-weight:bold;transform:scaleX(0.9511);transform-origin:left center;">Data Flow</span>
<span class="t" style="top:658.75px;font-size:16.25px;color:#2d85cb;left:869px;font-weight:bold;transform:scaleX(0.9381);transform-origin:left center;">Attributes</span>
<span class="t" style="top:695.0px;font-size:12.5px;color:#757575;left:853px;transform:scaleX(0.9729);transform-origin:left center;">Native Type</span>
<span class="t" style="top:693.75px;font-size:14px;color:#444;left:981.5px;transform:scaleX(0.9351);transform-origin:left center;">TABLE</span>
<span class="t" style="top:723.5px;font-size:12.5px;color:#757575;left:853px;transform:scaleX(0.9927);transform-origin:left center;">Data Select Method</span>
<span class="t" style="top:723.75px;font-size:12.5px;color:#4a6f94;left:989px;transform:scaleX(1.0099);transform-origin:left center;">Default</span>
</body></html>
